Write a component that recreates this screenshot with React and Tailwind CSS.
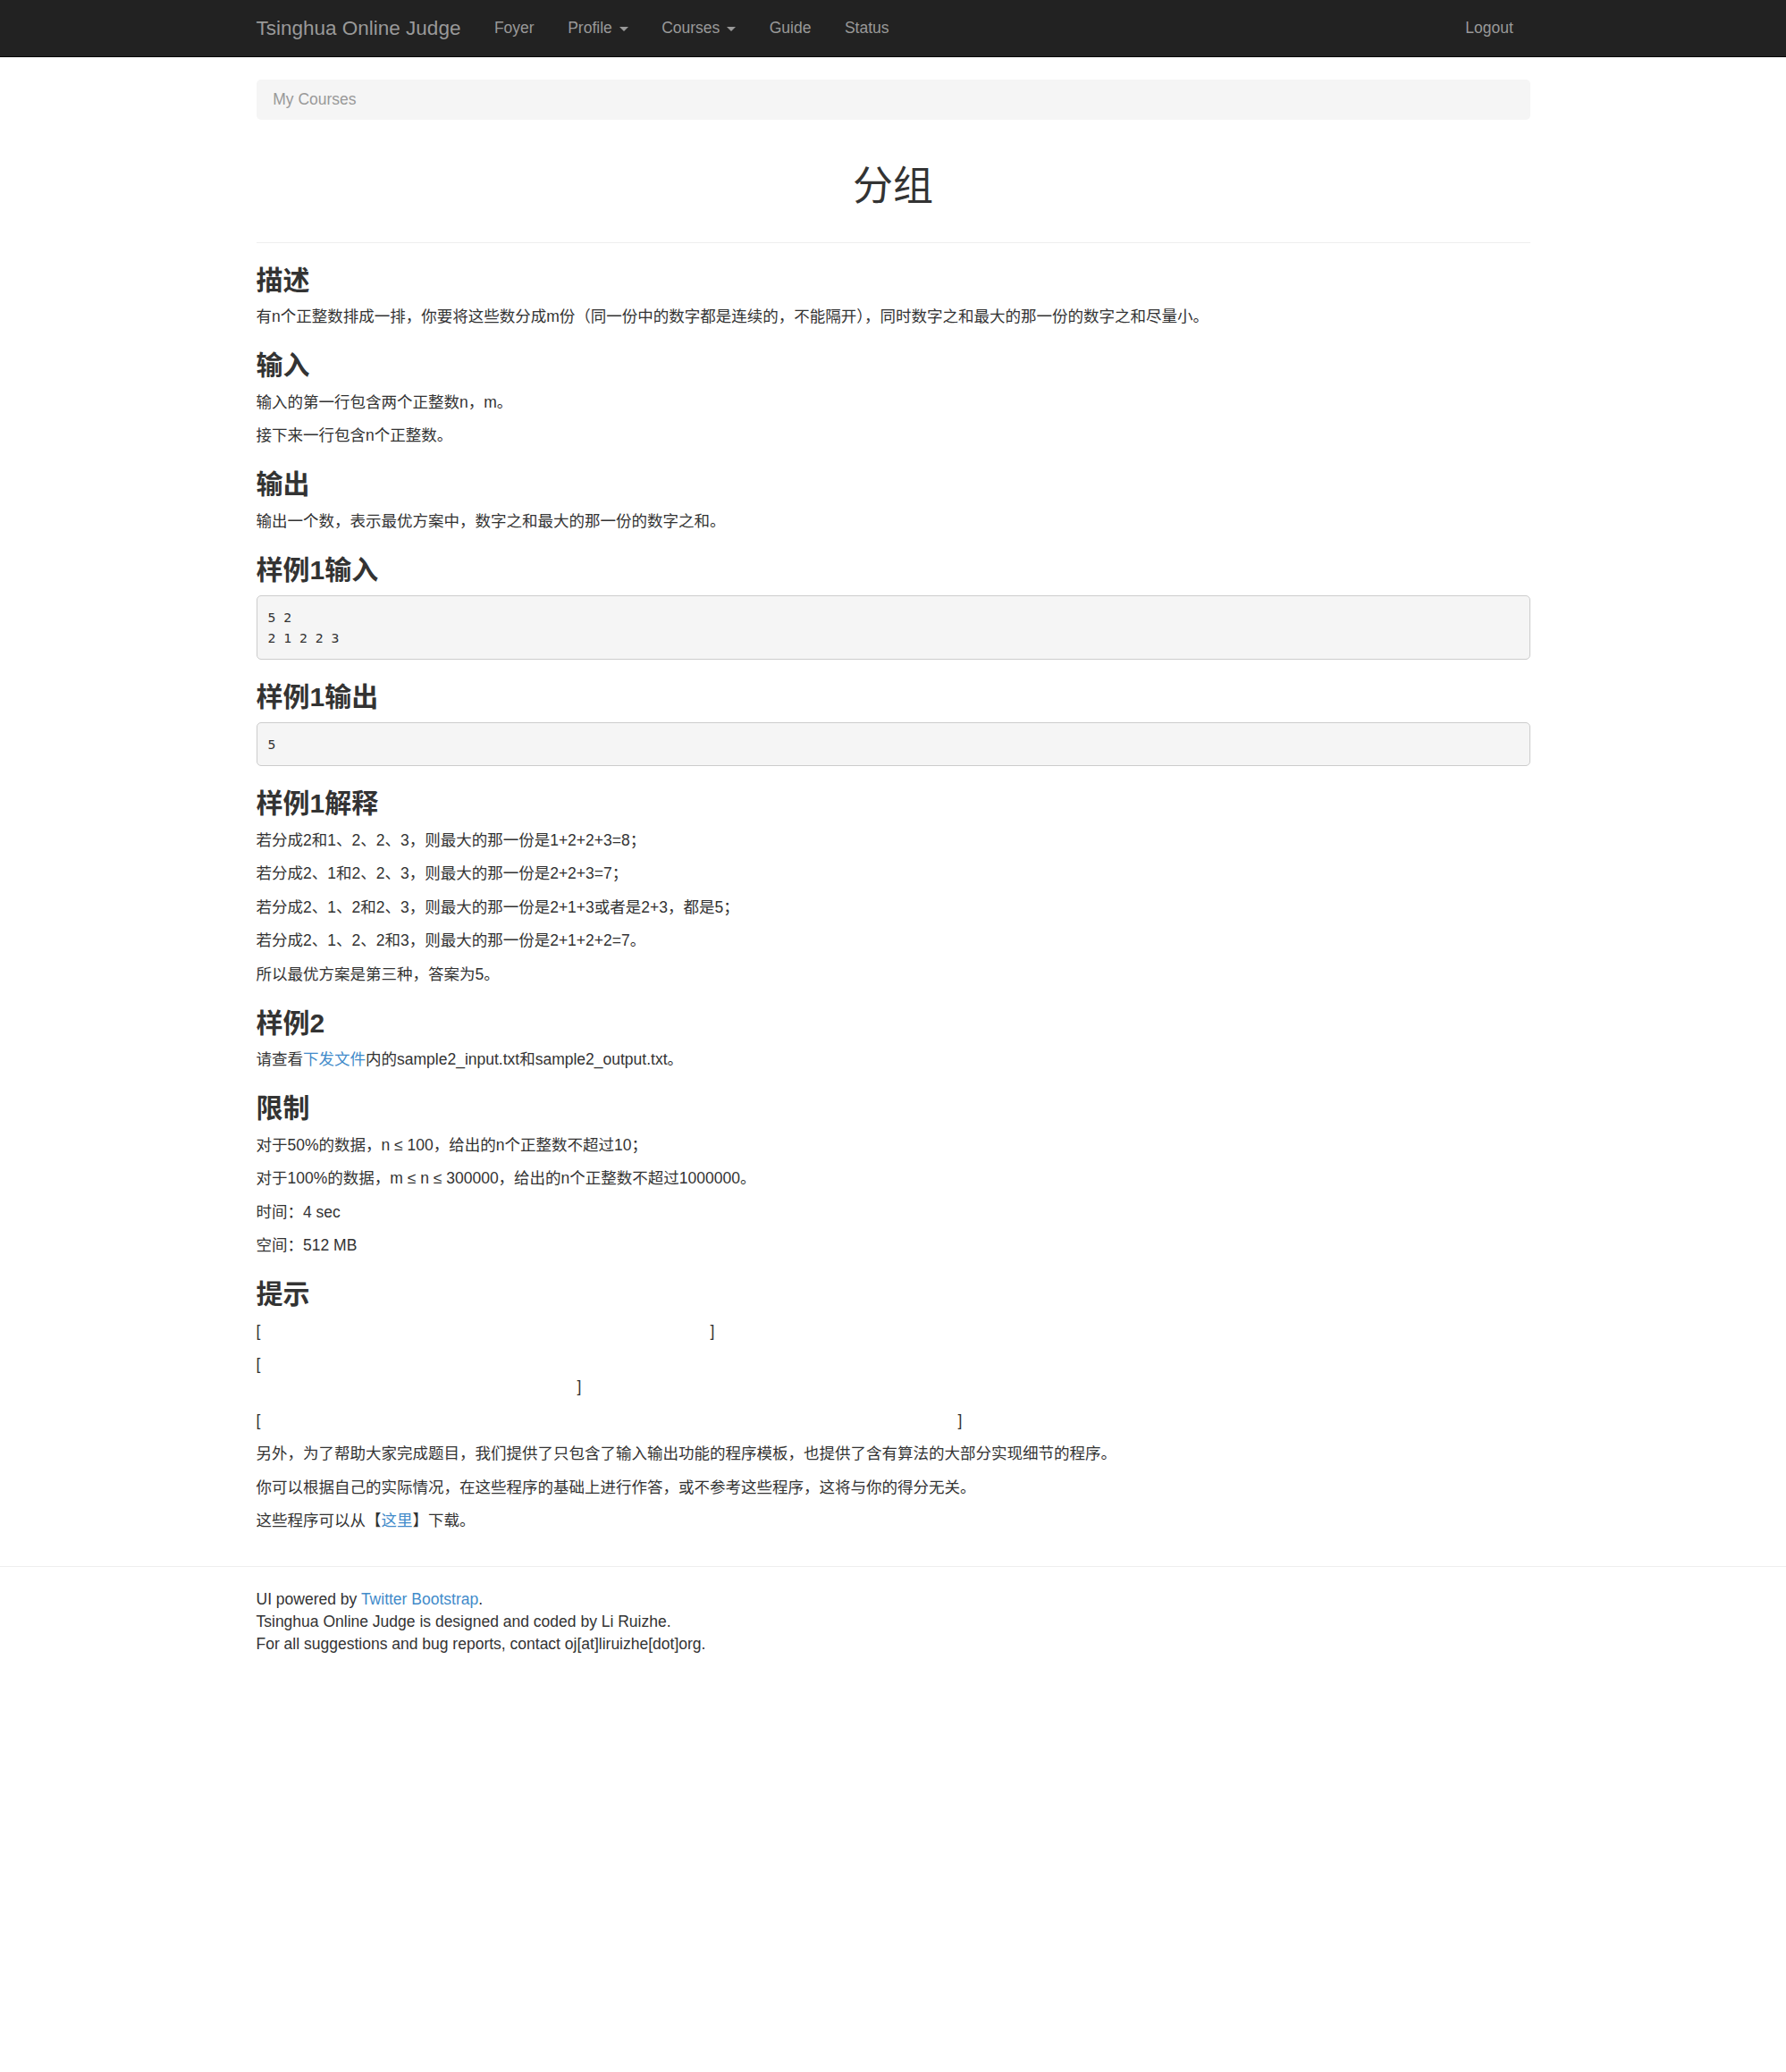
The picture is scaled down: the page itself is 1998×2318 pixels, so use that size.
import React from 'react';

const sans = "font-['Liberation_Sans','Noto_Sans_CJK_SC',sans-serif]";

function Caret() {
  return <span className="inline-block w-0 h-0 ml-[3px] align-middle border-t-[5px] border-x-[5px] border-x-transparent border-t-[#999]" />;
}

function Navbar() {
  const links = [
    { label: 'Foyer' },
    { label: 'Profile', caret: true },
    { label: 'Courses', caret: true },
    { label: 'Guide' },
    { label: 'Status' },
  ];
  return (
    <div className="bg-[#222] border-b border-[#080808] h-[64px]">
      <div className="w-[1425px] mx-auto h-full flex items-center">
        <a className="text-[22.5px] text-[#999] pr-[18.75px] leading-[25px]">Tsinghua Online Judge</a>
        <ul className="flex">
          {links.map(link => (
            <li key={link.label}>
              <a className="px-[18.75px] text-[17.5px] leading-[25px] text-[#999]">
                {link.label}{link.caret && <> <Caret /></>}
              </a>
            </li>
          ))}
        </ul>
        <a className="ml-auto px-[18.75px] text-[17.5px] leading-[25px] text-[#999]">Logout</a>
      </div>
    </div>
  );
}

function H3({ children }) {
  return <h3 className="text-[30px] leading-[33px] font-bold mt-[25px] mb-[12.5px]">{children}</h3>;
}

function P({ children }) {
  return <p className="mb-[12.5px]">{children}</p>;
}

function Pre({ children }) {
  return (
    <pre className="font-['DejaVu_Sans_Mono',monospace] text-[14.75px] leading-[23.2px] bg-[#f5f5f5] border border-[#ccc] rounded-[5px] px-[11.875px] py-[11.75px] mb-[12.5px]">{children}</pre>
  );
}

function Gap({ w }) {
  return <span className="inline-block" style={{ width: w }} />;
}

export default function App() {
  return (
    <div className={`${sans} text-[#333] text-[17.5px] leading-[25px] bg-white min-h-[2318px]`}>
      <Navbar />
      <div className="w-[1425px] mx-auto">
        <div className="mt-[25px] h-[45px] bg-[#f5f5f5] rounded-[5px] px-[18.75px] flex items-center text-[#999]">My Courses</div>

        <div className="mt-[50px] pb-[37px] border-b border-[#eee]">
          <h1 className="text-[45px] leading-[49.5px] font-normal text-center">分组</h1>
        </div>

        <H3>描述</H3>
        <P>有n个正整数排成一排，你要将这些数分成m份（同一份中的数字都是连续的，不能隔开），同时数字之和最大的那一份的数字之和尽量小。</P>

        <H3>输入</H3>
        <P>输入的第一行包含两个正整数n，m。</P>
        <P>接下来一行包含n个正整数。</P>

        <H3>输出</H3>
        <P>输出一个数，表示最优方案中，数字之和最大的那一份的数字之和。</P>

        <H3>样例1输入</H3>
        <Pre>{'5 2\n2 1 2 2 3'}</Pre>

        <H3>样例1输出</H3>
        <Pre>5</Pre>

        <H3>样例1解释</H3>
        <P>若分成2和1、2、2、3，则最大的那一份是1+2+2+3=8；</P>
        <P>若分成2、1和2、2、3，则最大的那一份是2+2+3=7；</P>
        <P>若分成2、1、2和2、3，则最大的那一份是2+1+3或者是2+3，都是5；</P>
        <P>若分成2、1、2、2和3，则最大的那一份是2+1+2+2=7。</P>
        <P>所以最优方案是第三种，答案为5。</P>

        <H3>样例2</H3>
        <P>请查看<a className="text-[#428bca]">下发文件</a>内的sample2_input.txt和sample2_output.txt。</P>

        <H3>限制</H3>
        <P>对于50%的数据，n ≤ 100，给出的n个正整数不超过10；</P>
        <P>对于100%的数据，m ≤ n ≤ 300000，给出的n个正整数不超过1000000。</P>
        <P>时间：4 sec</P>
        <P>空间：512 MB</P>

        <H3>提示</H3>
        <P>[<Gap w={503} />]</P>
        <P>[<br /><Gap w={359} />]</P>
        <P>[<Gap w={780} />]</P>
        <P>另外，为了帮助大家完成题目，我们提供了只包含了输入输出功能的程序模板，也提供了含有算法的大部分实现细节的程序。</P>
        <P>你可以根据自己的实际情况，在这些程序的基础上进行作答，或不参考这些程序，这将与你的得分无关。</P>
        <P>这些程序可以从【<a className="text-[#428bca]">这里</a>】下载。</P>
      </div>

      <footer className="mt-[38px] border-t border-[#eee] pt-[24px]">
        <div className="w-[1425px] mx-auto">
          <div>UI powered by <a className="text-[#428bca]">Twitter Bootstrap</a>.</div>
          <div>Tsinghua Online Judge is designed and coded by Li Ruizhe.</div>
          <div>For all suggestions and bug reports, contact oj[at]liruizhe[dot]org.</div>
        </div>
      </footer>
    </div>
  );
}
